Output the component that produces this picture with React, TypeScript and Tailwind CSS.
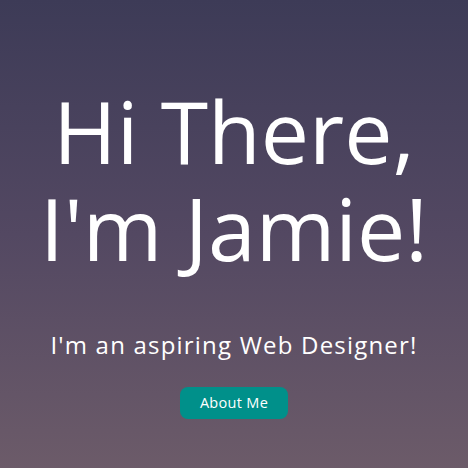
import React from 'react';

// Hero section: greeting, tagline and a call-to-action button
const App: React.FC = () => {
  return (
    <div
      className="w-[468px] h-[468px] overflow-hidden bg-gradient-to-b from-[#3d3b57] via-[#534862] to-[#6c5b69] text-white flex flex-col items-center"
      style={{ fontFamily: '"Open Sans", "DejaVu Sans", sans-serif' }}
    >
      <h1 className="mt-[82px] text-center text-[86px] leading-[97px] font-normal tracking-[0px]">
        Hi There,
        <br />
        I'm Jamie!
      </h1>
      <p className="mt-[54px] text-[24px] leading-[30px] tracking-[1.2px]">I'm an aspiring Web Designer!</p>
      <button className="mt-[27px] w-[108px] h-[32px] rounded-lg bg-[#00908a] text-[14.5px] tracking-[0.3px] text-white">
        About Me
      </button>
    </div>
  );
};

export default App;
